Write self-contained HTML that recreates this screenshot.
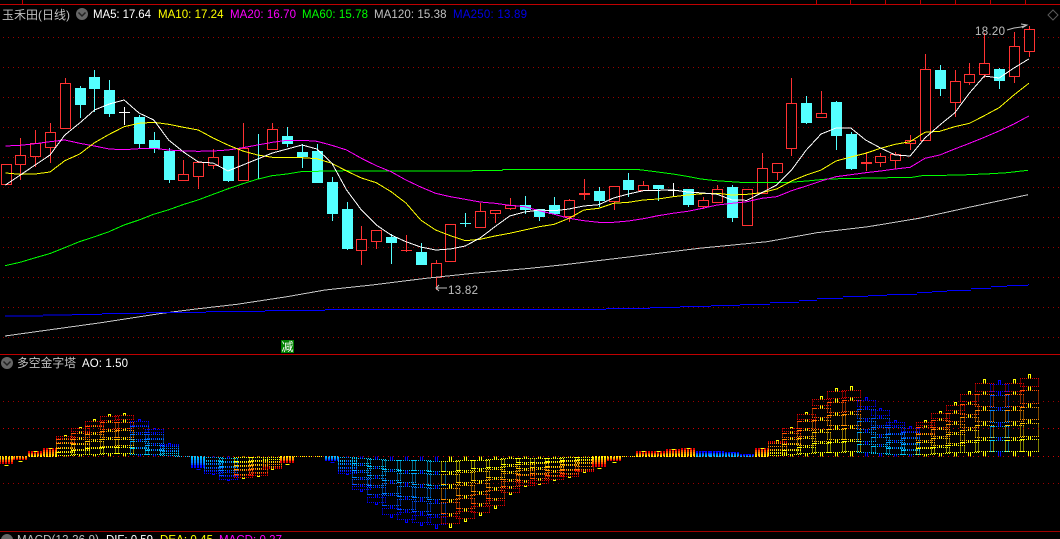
<!DOCTYPE html>
<html><head><meta charset="utf-8"><style>
html,body{margin:0;padding:0;background:#000;width:1060px;height:539px;overflow:hidden}
svg{display:block;position:absolute;left:0;top:0}
text{font-family:"Liberation Sans","Noto Sans CJK SC",sans-serif;font-size:11.5px}
</style></head><body>
<svg id="c" width="1060" height="539" viewBox="0 0 1060 539" xmlns="http://www.w3.org/2000/svg">
<g id="g" shape-rendering="crispEdges"></g>
<g id="labels">
<text x="2" y="19" textLength="68" lengthAdjust="spacingAndGlyphs" fill="#c0c0c0" style="font-size:12px">玉禾田(日线)</text>
<circle cx="82" cy="14" r="6" fill="#666"/><path d="M78.5 12.5L82 16L85.500 12.500" fill="none" stroke="#222" stroke-width="1.500"/>
<text x="93" y="18" textLength="58" fill="#fff">MA5: 17.64</text>
<text x="158" y="18" textLength="65.500" fill="#ff0">MA10: 17.24</text>
<text x="230" y="18" textLength="66" fill="#f0f">MA20: 16.70</text>
<text x="302" y="18" textLength="66" fill="#0f0">MA60: 15.78</text>
<text x="374" y="18" textLength="72.500" fill="#c0c0c0">MA120: 15.38</text>
<text x="453" y="18" textLength="74" fill="#0000e6">MA250: 13.89</text>
<path d="M1053 10L1058 15L1053 20L1048 15Z" fill="none" stroke="#5a5a5a"/>
<text x="975" y="35" textLength="30" fill="#c0c0c0">18.20</text>
<path d="M1007 30L1014 28L1021 27L1027 25M1021 24L1027 25L1022 28" fill="none" stroke="#c0c0c0"/>
<text x="448" y="294" textLength="30" fill="#c0c0c0">13.82</text>
<path d="M447 288L436 288M439 285L436 288L439 291" fill="none" stroke="#c0c0c0"/>
<rect x="281" y="340" width="13" height="13" fill="#008000"/>
<text x="281.500" y="351" fill="#fff" style="font-size:12px">减</text>
<circle cx="7" cy="363" r="6" fill="#666"/><path d="M3.500 361.500L7 365L10.500 361.500" fill="none" stroke="#222" stroke-width="1.500"/>
<text x="17" y="367" textLength="59" lengthAdjust="spacingAndGlyphs" fill="#c0c0c0" style="font-size:12px">多空金字塔</text>
<text x="82" y="367" textLength="46" fill="#fff">AO: 1.50</text>
<circle cx="7" cy="540" r="6" fill="#666"/>
<text x="17" y="543.500" textLength="82" fill="#c0c0c0">MACD(12,26,9)</text>
<text x="106" y="543.500" textLength="47" fill="#fff">DIF: 0.59</text>
<text x="160" y="543.500" textLength="53" fill="#ff0">DEA: 0.45</text>
<text x="219" y="543.500" textLength="63" fill="#f0f">MACD: 0.27</text>
</g>
</svg>
<script>
var o=[];
function L(x1,y1,x2,y2,c,d,w){o.push('<line x1="'+x1+'" y1="'+y1+'" x2="'+x2+'" y2="'+y2+'" stroke="'+c+'"'+(d?' stroke-dasharray="'+d+'"':'')+(w?' stroke-width="'+w+'"':'')+'/>')}
var X=function(i){return Math.round(5.5+14.83*i)};
// frame
L(0,4.5,1060,4.5,'#c00000');L(0,354.5,1060,354.5,'#c00000');L(0,531.5,1060,531.5,'#a00000');
[22,816,850,885,920,955,990,1025].forEach(function(x){L(x+.5,0,x+.5,4,'#c00000')});
// grid upper
for(var k=0;k<11;k++){var y=37.5+30*k;L(3,y,1060,y,'#9a0000','1 4')}
// candles
var C=[
'r',164,164,184,184,'r',138,155,164,180,'r',130,143,156,167,'r',123,132,147,163,'r',78,83,128,128,
'c',86,88,104,118,'c',70,77,88,112,'c',80,90,113,117,'w',107,112,112,125,'c',115,117,143,148,
'c',132,140,148,153,'c',148,151,179,183,'r',160,174,180,181,'r',161,162,176,189,'r',149,157,165,169,
'c',156,156,180,182,'r',123,148,180,180,'v',134,179,179,179,'r',123,129,149,149,'c',127,136,143,147,
'c',144,152,156,168,'c',144,151,182,182,'c',177,182,213,221,'c',202,209,248,250,'r',226,239,250,265,
'r',230,230,241,249,'c',234,237,242,264,'r',235,250,250,252,'c',243,252,264,264,'r',260,263,277,290,
'r',224,224,261,261,'c',213,223,223,227,'r',203,211,227,228,'r',210,210,213,223,'r',198,205,208,210,
'c',196,205,209,214,'c',209,209,216,221,'c',197,205,213,213,'r',199,200,216,222,'r',179,193,193,200,
'c',187,191,200,207,'r',186,186,201,210,'c',173,180,189,197,'r',181,185,190,190,'c',185,185,188,201,
'w',183,190,190,197,'c',189,189,204,207,'r',197,200,206,209,'r',185,189,202,202,'c',185,187,217,222,
'r',189,189,225,225,'r',153,168,193,193,'r',163,163,172,180,'r',78,103,148,156,'c',96,103,122,124,
'r',91,113,117,117,'c',101,102,135,150,'c',132,134,168,170,'r',152,162,162,171,'r',153,156,162,167,
'r',152,154,160,169,'r',135,140,143,150,'r',54,69,140,140,'c',65,70,88,96,'r',70,81,102,117,
'r',63,74,82,85,'r',33,63,74,78,'c',68,69,80,89,'r',32,46,76,83,'r',26,29,51,57];
var col={r:'#ff3232',c:'#54ffff',w:'#fff',v:'#54ffff'};
for(var i=0;i<70;i++){
 var t=C[i*5],a=C[i*5+1],b=C[i*5+2],e=C[i*5+3],f=C[i*5+4],x=X(i),c=col[t],xc=x+.5;
 L(xc,a,xc,b,c);L(xc,e,xc,f,c);
 if(t=='v'){continue}
 if(b==e){var th=(i==39||i==58)?2:1;o.push('<rect x="'+(x-5)+'" y="'+b+'" width="11" height="'+th+'" fill="'+c+'"/>');continue}
 if(t=='c')o.push('<rect x="'+(x-5)+'" y="'+b+'" width="11" height="'+(e-b+1)+'" fill="'+c+'"/>');
 else o.push('<rect x="'+(x-4.5)+'" y="'+(b+.5)+'" width="10" height="'+(e-b)+'" fill="#000" stroke="'+c+'"/>');
}
function P(c,p){o.push('<polyline fill="none" stroke="'+c+'" points="'+p+'"/>')}
function M(arr){return arr.map(function(v,i){return (5.5+14.83*i).toFixed(1)+','+v}).join(' ')}
// MA60
P('#00ff00','5,265.7 20,262.3 35.500,257.700 50.700,253.300 64.600,247.700 79.400,241.700 94.700,236.700 109,231.700 124,225 139,220 153.500,214.300 168,210 184,204.300 198,200 214,194 227.500,189 242,184 257,179.300 272,175.700 287,174 301,171.700 316,171.300 331,171 346,170.700 361,171 472,171 473,170.300 502,170.300 503,169.300 636,169.300 650,171 660,172.300 675,174.300 689,176.700 701,179 716,180.700 740,182.300 790,182.300 807,181 827,179 858,178.300 912,177.300 922,175.700 961,175 991,173.700 1007,172.700 1028,170.300');
// MA120
P('#c8c8c8','5,336 41,331 101,322.700 162,313.300 196,309 237,304.300 287,296.700 325,290 372,285 426,278.300 473,273.300 530,268.300 564,264.700 631,256.700 699,248.300 767,241.700 817,232.700 868,226.700 919,218.300 969,207.300 1028,194.700');
// MA250 (stair steps)
var bs=[[5,316],[43,315],[72,314.500],[102,313.500],[146,312.500],[206,311.500],[265,310.500],[325,309.500],[606,308.500],[650,307.500],[680,306.500],[711,305.500],[740,304.500],[770,302.500],[799,300.500],[817,298.500],[843,296.500],[868,295.500],[887,294.500],[917,292.500],[932,291.500],[947,290.500],[971,288.500],[991,286.500],[1007,285.500],[1028,284.500]];
var bp='';bs.forEach(function(p,j){var nx=j+1<bs.length?bs[j+1][0]:p[0]+1;bp+='M'+p[0]+' '+p[1]+'L'+nx+' '+p[1]});
o.push('<path d="'+bp+'" stroke="#0000ff" stroke-width="1" fill="none"/>');
// MA20
P('#ff00ff',M([146,145.300,143.700,141.700,140,143.300,146,149,149.700,148.700,148.300,150,151,151.300,151,150,147.700,145,142.300,140.300,140.300,141.300,145.300,150,158.300,165.700,171.700,180,187,193.300,196.700,199.300,202,203.300,205.300,206.700,210.700,214.300,218.300,220.700,222.300,222.300,221,218.700,215.700,213.300,211.300,208.300,205,203.300,201.700,198.300,196.700,190.700,186,181,176.700,174.700,172.700,171,169,167.300,158.300,155,149,143.300,137.300,131,124,116]));
// MA10
P('#ffff00',M([173,174.300,174,172,160.700,154,142.700,134.300,126.700,123.300,122.300,124.300,127.300,130,138,145,151,155,157.300,157.300,157.700,158.700,163.300,171,178,182.700,191.700,203,220,230,235.700,240.700,239.300,236,233.300,230,226.700,224.300,218.300,210,208.300,203.300,202.300,200,199,196.700,195,193.700,193.300,195,194.300,192.700,189,181,175,170,161,157,153.300,148.300,144.300,141.700,132.300,131.300,126.700,123.300,115.700,107.700,95,83.300]));
// MA5
P('#ffffff',M([185,175,165,155,135,123,110,104,100,113,120,140,152,162,163,171,165,159,153,149,145,149,163,190,210,225,235,241.700,247,250,249,246,238,226.700,216,212,210,210.700,209,206,204.700,198,194,190.700,190.300,190,192,193,194.300,200,200.300,192.700,185,170,150,134,128,128,140,148,155,156,138,125,113,93,76,78,68,59]));
// Pyramid
var y0=456.5;
var H=[-8,-4,6,9,21,29,37,42,43,37,28,13,0,-12,-18,-24,-22,-20,-13,-7,0,0,-5,-18,-35,-48,-61,-66,-69,-72,-71,-65,-59,-52,-38,-30,-28,-24,-21,-16,-11,-5,0,6,6,8,9,6,6,5,3,9,16,29,44,60,68,70,59,48,36,30,36,45,54,65,77,76,77,82];
var B={9:1,10:1,11:1,12:1,13:1,14:1,15:1,22:1,23:1,24:1,25:1,26:1,27:1,28:1,29:1,47:1,48:1,49:1,50:1,58:1,59:1,60:1,61:1,67:1};
var CW=['#e00000','#ff5000','#ff9000','#ffc800','#ffff00'],CB=['#0000ff','#0050ff','#0080ff','#00a8ff','#00c8ff'];
var FB=[[.05,.15],[.2,.354],[.4,.55],[.6,.75],[.79,.935]],FT=[[0,.05],[.15,.2],[.354,.4],[.55,.6],[.75,.79],[.935,1]];
for(var i=0;i<70;i++){
 var h=H[i],s=h<0?-1:1,A=Math.abs(h),x=X(i),bl=!!B[i],cs=bl?CB:CW,tc=bl?'#0000ff':'#ffff00';
 if(A==0){L(x-8,y0,x+7,y0,bl?'#00c8ff':'#ffff00','1 1');continue}
 if(A<13){
  for(var r=0;r<A;r++){var yy=y0-s*r;var idx=Math.min(4,Math.floor(5*(A-r-1)/A));L(x-7,yy,x+8,yy,cs[idx],'2 1')}
  var ty=Math.round(y0-s*A)+.5;L(x-1.5,ty,x+2.5,ty,tc,'',1);
  continue}
 var Y=function(f){return Math.floor(y0-s*A*(1-f))+.5};
 FB.forEach(function(q,j){
  var y1=Y(q[0]),y2=Y(q[1]),c=cs[j],d='1 1';
  L(x-9,y1,x+10,y1,c,d);L(x-9,y2,x+10,y2,c,d);
  L(x-8.5,y1,x-8.500,y2,c,d);L(x+9.5,y1,x+9.500,y2,c,d);
 });
 FT.forEach(function(q,j){
  var y1=Y(q[0]),y2=Y(q[1]);
  L(x-.5,y1,x-.5,y2,tc);L(x+1.5,y1,x+1.5,y2,tc);
  if(j==0)L(x-1,y1,x+2,y1,tc);
 });
 // short solid accents in the gaps
 if(A>20)FB.forEach(function(q,j){if(j>0){var yy=Y(q[0]);L(x-9,yy,x-4,yy,cs[j])}});
}
// grid lower
[401.5,483.5].forEach(function(y){L(3,y,1060,y,'#9a0000','1 4')});
[428.5,456.5].forEach(function(y){L(3,y,1060,y,'#d00000','1 4')});
document.getElementById('g').innerHTML=o.join('');
</script>
</body></html>
